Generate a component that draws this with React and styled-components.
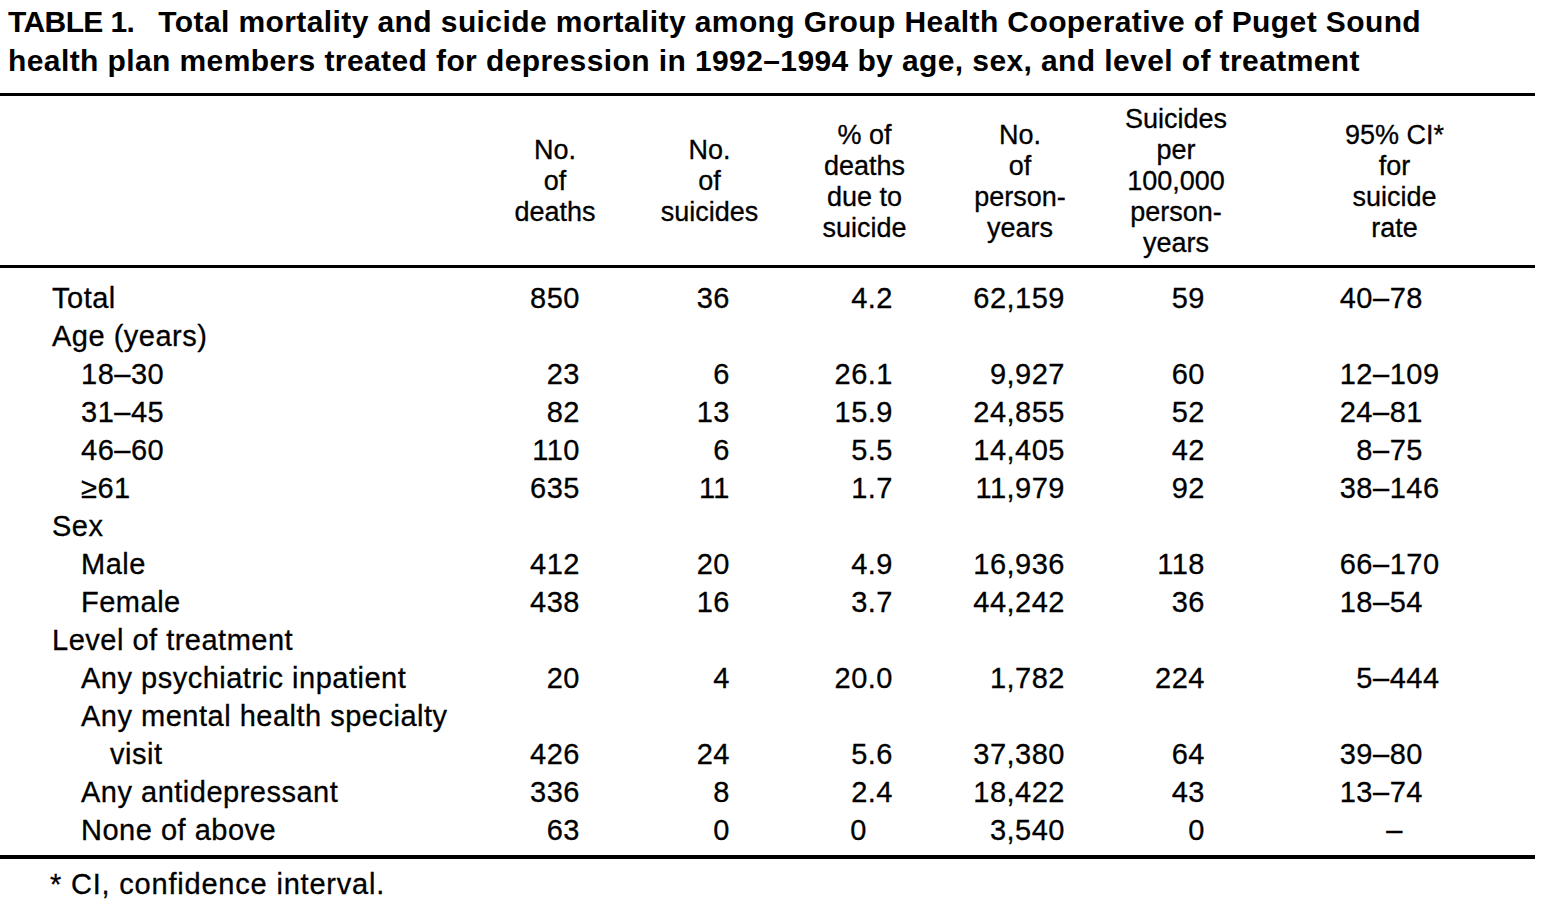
import React from "react";
import styled, { createGlobalStyle } from "styled-components";

const Global = createGlobalStyle`
  body {
    margin: 0;
    background: #fff;
    color: #000;
    font-family: "Liberation Sans", Arial, sans-serif;
  }
`;

const Page = styled.div`
  width: 1541px;
  height: 914px;
  overflow: hidden;
`;

const Title = styled.h1`
  margin: 0;
  padding: 2px 0 0 8px;
  font-size: 30px;
  font-weight: 700;
  line-height: 39px;
  letter-spacing: 0.4px;
  white-space: nowrap;
`;

const TableNo = styled.span`
  margin-right: 24px;
  letter-spacing: -0.6px;
`;

const Table = styled.table`
  margin-top: 13px;
  width: 1535px;
  border-collapse: collapse;
  table-layout: fixed;
  font-size: 29px;
  letter-spacing: 0.5px;
  -webkit-text-stroke: 0.3px #000;
`;

const Th = styled.th`
  border-top: 3px solid #000;
  border-bottom: 3px solid #000;
  padding: 8px 0 6px;
  font-weight: 400;
  font-size: 27px;
  letter-spacing: 0;
  line-height: 31px;
  text-align: center;
  vertical-align: middle;
`;

const Label = styled.td`
  padding: ${(p) => (p.$first ? "11px" : "0")} 0 ${(p) => (p.$last ? "6px" : "0")} ${(p) => 52 + p.$indent * 29}px;
  line-height: 38px;
  white-space: nowrap;
  border-bottom: ${(p) => (p.$last ? "4px solid #000" : "none")};
`;

const Num = styled.td`
  padding: ${(p) => (p.$first ? "11px" : "0")} ${(p) => p.$right}px ${(p) => (p.$last ? "6px" : "0")} 0;
  line-height: 38px;
  text-align: right;
  white-space: nowrap;
  border-bottom: ${(p) => (p.$last ? "4px solid #000" : "none")};
`;

const Ci = styled.td`
  padding: ${(p) => (p.$first ? "11px" : "0")} 0 ${(p) => (p.$last ? "6px" : "0")} 0;
  line-height: 38px;
  white-space: nowrap;
  text-align: ${(p) => (p.$empty ? "center" : "left")};
  border-bottom: ${(p) => (p.$last ? "4px solid #000" : "none")};
`;

const CiLow = styled.span`
  display: inline-block;
  width: 119px;
  text-align: right;
`;

const Footnote = styled.p`
  margin: 7px 0 0 50px;
  font-size: 29px;
  letter-spacing: 0.8px;
  line-height: 36px;
  -webkit-text-stroke: 0.3px #000;
`;

const cols = [478, 154, 155, 155, 156, 156, 281];
const rights = [52, 57, 49, 33, 49];

const headers = [
  ["No.", "of", "deaths"],
  ["No.", "of", "suicides"],
  ["% of", "deaths", "due to", "suicide"],
  ["No.", "of", "person-", "years"],
  ["Suicides", "per", "100,000", "person-", "years"],
  ["95% CI*", "for", "suicide", "rate"],
];

const rows = [
  { label: "Total", indent: 0, v: ["850", "36", "4.2", "62,159", "59", ["40", "78"]] },
  { label: "Age (years)", indent: 0 },
  { label: "18–30", indent: 1, v: ["23", "6", "26.1", "9,927", "60", ["12", "109"]] },
  { label: "31–45", indent: 1, v: ["82", "13", "15.9", "24,855", "52", ["24", "81"]] },
  { label: "46–60", indent: 1, v: ["110", "6", "5.5", "14,405", "42", ["8", "75"]] },
  { label: "≥61", indent: 1, v: ["635", "11", "1.7", "11,979", "92", ["38", "146"]] },
  { label: "Sex", indent: 0 },
  { label: "Male", indent: 1, v: ["412", "20", "4.9", "16,936", "118", ["66", "170"]] },
  { label: "Female", indent: 1, v: ["438", "16", "3.7", "44,242", "36", ["18", "54"]] },
  { label: "Level of treatment", indent: 0 },
  { label: "Any psychiatric inpatient", indent: 1, v: ["20", "4", "20.0", "1,782", "224", ["5", "444"]] },
  { label: "Any mental health specialty", indent: 1 },
  { label: "visit", indent: 2, v: ["426", "24", "5.6", "37,380", "64", ["39", "80"]] },
  { label: "Any antidepressant", indent: 1, v: ["336", "8", "2.4", "18,422", "43", ["13", "74"]] },
  { label: "None of above", indent: 1, v: ["63", "0", "0", "3,540", "0", null] },
];

function Row({ row, first, last }) {
  const v = row.v;
  return (
    <tr>
      <Label $indent={row.indent} $first={first} $last={last}>{row.label}</Label>
      {[0, 1, 2, 3, 4].map((i) => {
        // whole numbers in the % column sit on the units digit, not the decimal
        const extra = i === 2 && v && !v[i].includes(".") ? 26 : 0;
        return (
          <Num key={i} $right={rights[i] + extra} $first={first} $last={last}>
            {v ? v[i] : ""}
          </Num>
        );
      })}
      <Ci $first={first} $last={last} $empty={v && !v[5]}>
        {v && v[5] && (
          <>
            <CiLow>{v[5][0]}</CiLow>–{v[5][1]}
          </>
        )}
        {v && !v[5] && "–"}
      </Ci>
    </tr>
  );
}

export default function App() {
  return (
    <Page>
      <Global />
      <Title>
        <TableNo>TABLE 1.</TableNo>Total mortality and suicide mortality among Group Health Cooperative of Puget Sound
        <br />
        health plan members treated for depression in 1992–1994 by age, sex, and level of treatment
      </Title>
      <Table>
        <colgroup>
          {cols.map((w, i) => (
            <col key={i} style={{ width: w }} />
          ))}
        </colgroup>
        <thead>
          <tr>
            <Th />
            {headers.map((h, i) => (
              <Th key={i}>
                {h.map((line, j) => (
                  <div key={j}>{line}</div>
                ))}
              </Th>
            ))}
          </tr>
        </thead>
        <tbody>
          {rows.map((r, i) => (
            <Row key={i} row={r} first={i === 0} last={i === rows.length - 1} />
          ))}
        </tbody>
      </Table>
      <Footnote>* CI, confidence interval.</Footnote>
    </Page>
  );
}
